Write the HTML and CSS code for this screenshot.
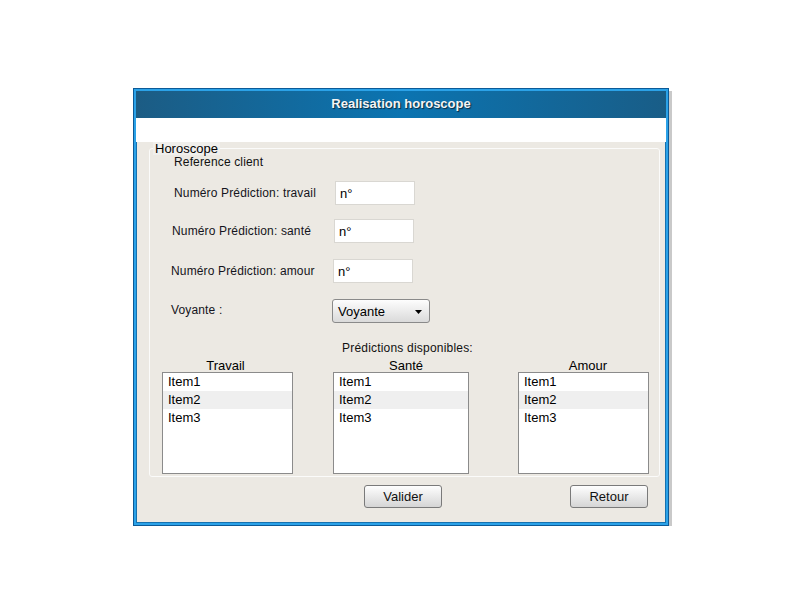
FILE: index.html
```html
<!DOCTYPE html>
<html lang="fr">
<head>
<meta charset="utf-8">
<title>Realisation horoscope</title>
<link rel="stylesheet" href="styles.css">
</head>
<body>
<div class="window">
  <div class="frame">
    <div class="titlebar">Realisation horoscope</div>
    <div class="menubar"></div>
    <div class="body">
      <fieldset class="group">
        <legend>Horoscope</legend>
        <div class="ref">Reference client</div>
        <div class="row r1"><span class="lbl w161">Numéro Prédiction: travail</span><input class="field" value="n°"></div>
        <div class="row r2"><span class="lbl w162">Numéro Prédiction: santé</span><input class="field" value="n°"></div>
        <div class="row r3"><span class="lbl w162">Numéro Prédiction: amour</span><input class="field" value="n°"></div>
        <div class="row r4"><span class="lbl w161 voy">Voyante :</span>
          <div class="select"><span>Voyante</span><svg class="arrow" width="7" height="4" viewBox="0 0 7 4"><polygon points="0,0 7,0 3.5,4" fill="#000"/></svg></div>
        </div>
        <div class="avail">Prédictions disponibles:</div>
        <div class="lists">
          <div class="col c1">
            <div class="colhead">Travail</div>
            <div class="list"><div class="item">Item1</div><div class="item alt">Item2</div><div class="item">Item3</div></div>
          </div>
          <div class="col c2">
            <div class="colhead">Santé</div>
            <div class="list"><div class="item">Item1</div><div class="item alt">Item2</div><div class="item">Item3</div></div>
          </div>
          <div class="col c3">
            <div class="colhead">Amour</div>
            <div class="list"><div class="item">Item1</div><div class="item alt">Item2</div><div class="item">Item3</div></div>
          </div>
        </div>
      </fieldset>
      <div class="buttons">
        <button class="btn">Valider</button>
        <button class="btn">Retour</button>
      </div>
    </div>
  </div>
</div>
</body>
</html>
```

FILE: styles.css
```css
html, body {
  margin: 0;
  background: #ffffff;
  font-family: "Liberation Sans", Arial, sans-serif;
  color: #111;
}

.window {
  margin: 88px 0 0 133px;
  width: 536px;
  height: 438px;
  box-sizing: border-box;
  border: 1px solid #0c5a97;
  box-shadow: 3px 3px 0 #c9c9c9;
}

.frame {
  height: 100%;
  box-sizing: border-box;
  border: 2px solid #2ba2e8;
  display: flex;
  flex-direction: column;
}

.titlebar {
  flex: none;
  height: 27px;
  box-sizing: border-box;
  background: linear-gradient(to right, #1c5c84, #0b74b1 50%, #195d87);
  color: #f4f4f4;
  font-weight: bold;
  font-size: 13px;
  line-height: 25px;
  text-align: center;
  text-shadow: 1px 1px 1px #0a2a40;
}

.menubar {
  flex: none;
  height: 24px;
  background: #ffffff;
}

.body {
  flex: 1;
  background: #ece9e3;
  border: 1px solid #1672b0;
  border-top: 0;
}

.group {
  margin: 0 5px 0 12px;
  padding: 0 0 2px 0;
  border: 1px solid #fbfbfa;
  border-radius: 3px;
  min-width: 0;
}

.group legend {
  margin-left: 3px;
  padding: 0 2px;
  font-size: 13px;
  line-height: 13px;
  background: #f0efec;
  color: #000;
}

.ref {
  padding-left: 24px;
  font-size: 12px;
  line-height: 14px;
  letter-spacing: 0.15px;
}

.row {
  display: flex;
  align-items: center;
  height: 24px;
  font-size: 12px;
  letter-spacing: 0.15px;
}

.r1 { margin-top: 12px; padding-left: 24px; }
.r2 { margin-top: 14px; padding-left: 22px; }
.r3 { margin-top: 16px; padding-left: 21px; }
.r4 { margin-top: 16px; padding-left: 21px; align-items: flex-start; }

.lbl { flex: none; line-height: 14px; color: #141420; }
.w161 { width: 161px; }
.w162 { width: 162px; }
.voy { margin-top: 4px; }

.field {
  width: 80px;
  height: 24px;
  box-sizing: border-box;
  margin: 0;
  border: 1px solid #d9d7d2;
  background: #ffffff;
  padding: 0 0 0 4px;
  font: 13px "Liberation Sans", Arial, sans-serif;
  color: #000;
  outline: none;
}

.select {
  width: 98px;
  height: 24px;
  box-sizing: border-box;
  border: 1px solid #8a8a8a;
  border-radius: 3px;
  background: linear-gradient(#fdfdfd, #dadada);
  display: flex;
  align-items: center;
  justify-content: space-between;
  padding: 0 7px 0 5px;
  font-size: 13px;
  letter-spacing: 0;
  color: #000;
}

.arrow { margin-top: 1px; }

.avail {
  margin-top: 18px;
  padding-left: 192px;
  font-size: 12px;
  line-height: 14px;
  letter-spacing: 0.2px;
}

.lists {
  display: flex;
  margin-top: 4px;
  padding-left: 12px;
}

.col { flex: none; }
.c1 { width: 131px; }
.c2 { width: 136px; margin-left: 40px; }
.c3 { width: 131px; margin-left: 49px; }

.colhead {
  font-size: 13px;
  line-height: 13px;
  text-align: center;
  color: #000;
}
.c1 .colhead { padding-right: 4px; }
.c2 .colhead { padding-left: 10px; }
.c3 .colhead { padding-left: 9px; }

.list {
  height: 102px;
  box-sizing: border-box;
  border: 1px solid #8b8b8b;
  background: #ffffff;
}

.item {
  height: 18px;
  line-height: 18px;
  padding-left: 5px;
  font-size: 13px;
  color: #000;
}
.item.alt { background: #efefef; }

.buttons {
  display: flex;
  margin-top: 8px;
  padding-left: 227px;
  gap: 128px;
}

.btn {
  width: 78px;
  height: 23px;
  box-sizing: border-box;
  margin: 0;
  padding: 0;
  border: 1px solid #7a7a7a;
  border-radius: 3px;
  background: linear-gradient(#fefefe, #d5d5d5);
  font: 13px "Liberation Sans", Arial, sans-serif;
  color: #111;
}
```
